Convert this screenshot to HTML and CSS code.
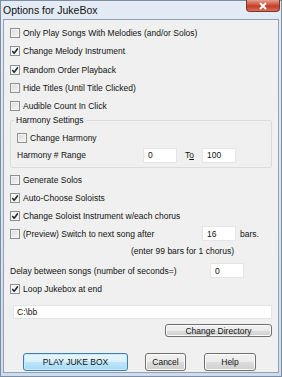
FILE: index.html
```html
<!DOCTYPE html>
<html lang="en">
<head>
  <meta charset="UTF-8">
  <title>Options for JukeBox</title>
  <link rel="stylesheet" href="styles.css">
</head>
<body>

  <div class="window">
    <div class="titlebar">
      <span class="title">Options for JukeBox</span>
      <div class="close">
        <svg width="10" height="8" viewBox="0 0 10 8"><path d="M2 1 L8 7 M8 1 L2 7" stroke="#fff" stroke-width="2"/></svg>
      </div>
    </div>

    <div class="client">
      <div class="row"><span class="box"></span>Only Play Songs With Melodies (and/or Solos)</div>
      <div class="row"><span class="box checked"></span>Change Melody Instrument</div>
      <div class="row"><span class="box checked"></span>Random Order Playback</div>
      <div class="row"><span class="box"></span>Hide Titles (Until Title Clicked)</div>
      <div class="row"><span class="box"></span>Audible Count In Click</div>

      <div class="group">
        <div class="legend">Harmony Settings</div>
        <div class="row"><span class="box"></span>Change Harmony</div>
        <div class="row range">
          <span class="label">Harmony # Range</span>
          <span class="field f-from">0</span>
          <span class="to">T<u>o</u></span>
          <span class="field">100</span>
        </div>
      </div>

      <div class="row2"><span class="box"></span>Generate Solos</div>
      <div class="row2"><span class="box checked"></span>Auto-Choose Soloists</div>
      <div class="row2"><span class="box checked"></span>Change Soloist Instrument w/each chorus</div>
      <div class="row2 preview">
        <span class="box"></span><span class="label">(Preview) Switch to next song after</span>
        <span class="field">16</span>
        <span class="unit">bars.</span>
      </div>
      <div class="note">(enter 99 bars for 1 chorus)</div>
      <div class="row2 delay">
        <span class="label">Delay between songs (number of seconds=)</span>
        <span class="field">0</span>
      </div>
      <div class="row2 loop"><span class="box checked"></span>Loop Jukebox at end</div>

      <div class="path">C:\bb</div>
      <div class="dir-line"><span class="btn dir">Change Directory</span></div>

      <div class="buttons">
        <span class="btn default play">PLAY JUKE BOX</span>
        <span class="btn cancel">Cancel</span>
        <span class="btn help">Help</span>
      </div>
    </div>
  </div>

</body>
</html>
```

FILE: styles.css
```css
body {
  margin: 0;
  font-family: "Liberation Sans", Arial, sans-serif;
  font-size: 8.5px;
  color: #111;
}
.window {
  width: 282px;
  height: 377px;
  box-sizing: border-box;
  border: 1px solid #7d8ea4;
  background: linear-gradient(#e3ebf5, #cfdcec);
  display: flex;
  flex-direction: column;
}
.titlebar {
  height: 18px;
  display: flex;
  align-items: flex-start;
  justify-content: space-between;
}
.title {
  font-size: 10.5px;
  margin: 3px 0 0 2px;
  color: #111;
}
.close {
  width: 34px;
  height: 12px;
  margin: -1px 1px 0 0;
  box-sizing: border-box;
  border: 1px solid #7a352c;
  border-top: none;
  border-radius: 0 0 4px 4px;
  background: linear-gradient(#e6a191, #c9472f 50%, #c5412c 60%, #d9705a);
  display: flex;
  align-items: center;
  justify-content: center;
}
.client {
  flex: 1;
  margin: 0 2px 3px 2px;
  border: 1px solid #8fa2ba;
  background: #f0f0f0;
  padding: 4px 0 0 6px;
  display: flex;
  flex-direction: column;
}
.row, .row2 {
  height: 18.3px;
  display: flex;
  align-items: center;
}
.row2 {
  height: 17.8px;
}
.box {
  width: 8px;
  height: 8px;
  border: 1px solid #8e8f8f;
  background: linear-gradient(135deg, #d8d8d8, #f8f8f8);
  margin-right: 3px;
  flex: none;
  box-shadow: inset 0 0 0 1px #f4f4f4;
}
.box.checked {
  background: #f4f4f4 url("data:image/svg+xml,%3Csvg xmlns='http://www.w3.org/2000/svg' width='8' height='8'%3E%3Cpath d='M1.2 4 L3.2 6.3 L7 1.2' fill='none' stroke='%23222a3a' stroke-width='1.6'/%3E%3C/svg%3E") center no-repeat;
}
.group {
  margin: 5px 6px 3px 0;
  height: 48px;
  box-sizing: border-box;
  border: 1px solid #dcdcdc;
  border-radius: 2px;
  position: relative;
  padding: 7px 0 0 6px;
}
.legend {
  position: absolute;
  top: -6px;
  left: 3px;
  padding: 0 2px;
  background: #f0f0f0;
}
.range {
  height: 17px;
}
.field {
  width: 34px;
  height: 15px;
  box-sizing: border-box;
  border: 1px solid #e2e5ea;
  background: #fff;
  padding-left: 4px;
  display: flex;
  align-items: center;
}
.range .label {
  width: 126px;
}
.range .to {
  width: 25px;
  padding-left: 8px;
  box-sizing: border-box;
}
.preview .label {
  width: 179px;
}
.preview .unit {
  margin-left: 4px;
}
.note {
  height: 16px;
  display: flex;
  align-items: center;
  padding-left: 121px;
}
.delay {
  margin-top: 3px;
}
.delay .label {
  width: 200px;
}
.loop {
  margin-top: 1px;
}
.path {
  margin: 7px 6px 0 3px;
  height: 14px;
  box-sizing: border-box;
  border: 1px solid #e2e5ea;
  background: #fff;
  padding-left: 3px;
  display: flex;
  align-items: center;
}
.dir-line {
  display: flex;
  justify-content: flex-end;
  margin: 5px 6px 0 0;
}
.btn {
  box-sizing: border-box;
  border: 1px solid #707070;
  border-radius: 3px;
  background: linear-gradient(#f2f2f2, #ebebeb 50%, #dddddd 51%, #cfcfcf);
  display: flex;
  align-items: center;
  justify-content: center;
  box-shadow: inset 0 0 0 1px #fbfbfb;
}
.dir {
  width: 107px;
  height: 13px;
}
.buttons {
  display: flex;
  margin: 16px 0 0 13px;
}
.buttons .btn {
  height: 18px;
}
.default {
  border-color: #3c7fb1;
  background: linear-gradient(#eaf6fd, #d9f0fc 50%, #bee6fd 51%, #a7d9f5);
  box-shadow: inset 0 0 0 1px #c5eafd;
}
.play {
  width: 105px;
}
.cancel {
  width: 41px;
  margin-left: 17px;
}
.help {
  width: 52px;
  margin-left: 18px;
}
```
